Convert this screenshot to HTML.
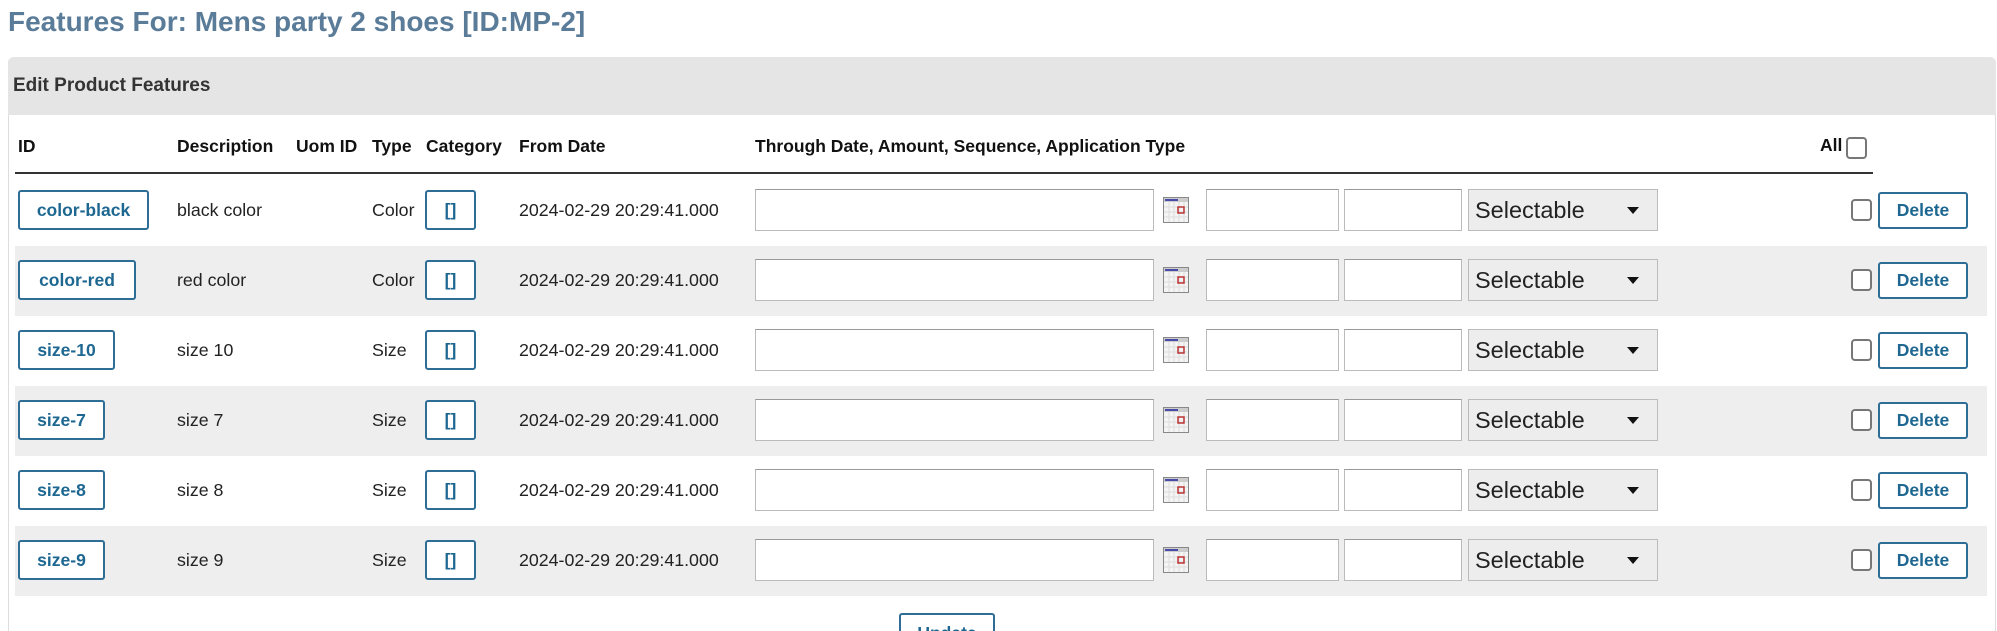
<!DOCTYPE html>
<html><head><meta charset="utf-8"><style>
*{box-sizing:border-box}
html,body{margin:0;width:1997px;height:631px;overflow:hidden}
body{background:#fff;font-family:"Liberation Sans",Arial,sans-serif;position:relative}
.a{position:absolute}
h1{position:absolute;left:8px;top:6px;margin:0;font-size:28px;font-weight:bold;color:#5b7c99;white-space:nowrap}
.panel{position:absolute;left:8px;top:57px;width:1988px;height:574px;border:1px solid #ddd;border-bottom:none;border-radius:6px 6px 0 0;background:#fff}
.ph{position:absolute;left:8px;top:57px;width:1988px;height:58px;background:#e5e5e5;border-radius:6px 6px 0 0}
.ph span{position:absolute;left:5px;top:18px;font-size:19px;font-weight:bold;color:#333;white-space:nowrap}
.th{position:absolute;top:136px;font-size:17.5px;font-weight:bold;color:#111;white-space:nowrap}
.hl{position:absolute;left:15px;top:172px;width:1858px;height:2px;background:#333}
.row{position:absolute;left:15px;width:1972px;height:70px}
.alt{background:#eee}
.btn{position:absolute;border:2px solid #2e6e96;border-radius:3px;background:#fff;color:#1d6791;font-weight:bold;font-size:17.5px;text-align:center;line-height:36px;height:40px;white-space:nowrap}
.t{position:absolute;font-size:17.8px;color:#222;line-height:20px;white-space:nowrap}
.in{position:absolute;background:#fff;border:1px solid #bbb;border-top-color:#999;height:42px}
.sel{position:absolute;background:#ededed;border:1px solid #bbb;height:42px;font-size:23.5px;color:#222;line-height:40px;padding-left:6px}
.sel:after{content:"";position:absolute;right:18px;top:17px;border-left:6px solid transparent;border-right:6px solid transparent;border-top:7px solid #111}
.cb{position:absolute;width:21px;height:22px;border:2px solid #777;border-radius:4px;background:#fff}
</style></head><body>
<h1>Features For: Mens party 2 shoes [ID:MP-2]</h1>
<div class="panel"></div>
<div class="ph"><span>Edit Product Features</span></div>
<div class="th" style="left:18px">ID</div>
<div class="th" style="left:177px">Description</div>
<div class="th" style="left:296px">Uom ID</div>
<div class="th" style="left:372px">Type</div>
<div class="th" style="left:426px">Category</div>
<div class="th" style="left:519px">From Date</div>
<div class="th" style="left:755px">Through Date, Amount, Sequence, Application Type</div>
<div class="th" style="left:1820px;top:135px">All</div>
<div class="cb" style="left:1846px;top:137px"></div>
<div class="hl"></div>

<div id="rows"></div>
<script>
var d=[["color-black","black color","Color"],["color-red","red color","Color"],["size-10","size 10","Size"],["size-7","size 7","Size"],["size-8","size 8","Size"],["size-9","size 9","Size"]];
var cal='<svg width="26" height="26" viewBox="0 0 26 26"><rect x="0.5" y="0.5" width="25" height="25" fill="#f4f4f4" stroke="#888"/><rect x="1" y="1" width="24" height="4" fill="#ccc"/><rect x="2" y="2" width="13" height="2" fill="#4a4aa8"/><g stroke="#ddd"><path d="M1 10H25M1 15H25M1 20H25M6 5V25M11 5V25M16 5V25M21 5V25"/></g><rect x="15" y="10" width="6" height="6" fill="none" stroke="#b33" stroke-width="1.5"/></svg>';
var h='';
d.forEach(function(r,i){
 var y=176+i*70;
 h+='<div class="row'+(i%2?' alt':'')+'" style="top:'+y+'px"></div>';
 var c=y+34;
 var w={"color-black":131,"color-red":118,"size-10":97,"size-7":87,"size-8":87,"size-9":87}[r[0]];
 h+='<div class="btn" style="left:18px;top:'+(c-20)+'px;width:'+w+'px">'+r[0]+'</div>';
 h+='<div class="t" style="left:177px;top:'+(c-10)+'px">'+r[1]+'</div>';
 h+='<div class="t" style="left:372px;top:'+(c-10)+'px">'+r[2]+'</div>';
 h+='<div class="btn" style="left:425px;top:'+(c-20)+'px;width:51px">[]</div>';
 h+='<div class="t" style="left:519px;top:'+(c-10)+'px">2024-02-29 20:29:41.000</div>';
 h+='<div class="in" style="left:755px;top:'+(c-21)+'px;width:399px"></div>';
 h+='<div class="a" style="left:1163px;top:'+(c-13)+'px;height:26px">'+cal+'</div>';
 h+='<div class="in" style="left:1206px;top:'+(c-21)+'px;width:133px"></div>';
 h+='<div class="in" style="left:1344px;top:'+(c-21)+'px;width:118px"></div>';
 h+='<div class="sel" style="left:1468px;top:'+(c-21)+'px;width:190px">Selectable</div>';
 h+='<div class="cb" style="left:1851px;top:'+(c-11)+'px"></div>';
 h+='<div class="btn" style="left:1878px;top:'+(c-18)+'px;width:90px;height:37px;line-height:33px">Delete</div>';
});
h+='<div class="btn" style="left:899px;top:613px;width:96px">Update</div>';
document.getElementById('rows').innerHTML=h;
</script>
</body></html>
